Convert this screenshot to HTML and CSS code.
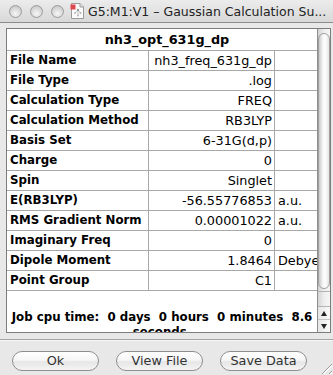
FILE: index.html
```html
<!DOCTYPE html>
<html>
<head>
<meta charset="utf-8">
<title>G5:M1:V1 – Gaussian Calculation Summary</title>
<link rel="stylesheet" href="styles.css">
</head>
<body>
<div class="window">
  <div class="titlebar">
    <div class="lights"><span class="light"></span><span class="light"></span><span class="light"></span></div>
    <svg class="docicon" width="15" height="16" viewBox="0 0 15 16">
      <path d="M1.5 0.5 H10 L13.5 4 V15.5 H1.5 Z" fill="#fbfbfb" stroke="#9a9a9a"/>
      <path d="M10 0.5 V4 H13.5" fill="#e4e4e4" stroke="#9a9a9a"/>
      <rect x="0.5" y="1.5" width="5" height="5" fill="#e0474c"/>
      <path d="M8 7 L5 10 M8 7 L10.5 10 M8 7 L8 12.5" stroke="#b8b8b8" stroke-width="0.8"/>
      <circle cx="8" cy="7" r="1.2" fill="#9a9a9a"/>
      <circle cx="5" cy="10" r="0.9" fill="#b0b0b0"/>
      <circle cx="10.5" cy="10" r="0.9" fill="#b0b0b0"/>
      <circle cx="8" cy="12.5" r="0.9" fill="#b0b0b0"/>
    </svg>
    <div class="title">G5:M1:V1 – Gaussian Calculation Su...</div>
  </div>
  <div class="content">
    <div class="box">
      <div class="upper">
        <div class="grid">
          <div class="head">nh3_opt_631g_dp</div>
          <div class="lab">File Name</div><div class="val">nh3_freq_631g_dp</div><div class="unit"></div>
          <div class="lab">File Type</div><div class="val">.log</div><div class="unit"></div>
          <div class="lab">Calculation Type</div><div class="val">FREQ</div><div class="unit"></div>
          <div class="lab">Calculation Method</div><div class="val">RB3LYP</div><div class="unit"></div>
          <div class="lab">Basis Set</div><div class="val">6-31G(d,p)</div><div class="unit"></div>
          <div class="lab">Charge</div><div class="val">0</div><div class="unit"></div>
          <div class="lab">Spin</div><div class="val">Singlet</div><div class="unit"></div>
          <div class="lab">E(RB3LYP)</div><div class="val">-56.55776853</div><div class="unit">a.u.</div>
          <div class="lab">RMS Gradient Norm</div><div class="val">0.00001022</div><div class="unit">a.u.</div>
          <div class="lab">Imaginary Freq</div><div class="val">0</div><div class="unit"></div>
          <div class="lab">Dipole Moment</div><div class="val">1.8464</div><div class="unit">Debye</div>
          <div class="lab">Point Group</div><div class="val">C1</div><div class="unit"></div>
        </div>
        <div class="vscroll"><div class="thumb"></div></div>
      </div>
      <div class="lower">
        <div class="job">Job cpu time:  0 days  0 hours  0 minutes  8.6<br>seconds.</div>
        <div class="vscroll small">
          <div class="arrow up"></div>
          <div class="arrow down"></div>
        </div>
      </div>
    </div>
    <div class="sep"></div>
    <div class="buttons">
      <button class="btn">Ok</button>
      <button class="btn">View File</button>
      <button class="btn">Save Data</button>
    </div>
  </div>
  <div class="grip"></div>
</div>
</body>
</html>
```

FILE: styles.css
```css
html, body {
  margin: 0;
  padding: 0;
}
body {
  width: 333px;
  height: 375px;
  overflow: hidden;
  background: #e8e8e8;
  font-family: "DejaVu Sans", "Liberation Sans", sans-serif;
  color: #000;
}
.window {
  position: relative;
  width: 333px;
  height: 375px;
  background: #e8e8e8;
}
.titlebar {
  height: 22px;
  border-bottom: 1px solid #8c8c8c;
  background: linear-gradient(#ececec, #d8d8d8);
  display: flex;
  align-items: center;
}
.lights {
  display: flex;
  gap: 8px;
  margin-left: 9px;
}
.light {
  width: 11px;
  height: 11px;
  border-radius: 50%;
  border: 1px solid #9c9c9c;
  background: radial-gradient(circle at 50% 70%, #f6f6f6 0%, #dedede 45%, #bdbdbd 100%);
}
.docicon {
  margin-left: 6px;
  margin-top: -1px;
}
.title {
  margin-left: 3px;
  font-size: 12.5px;
  color: #222;
  white-space: nowrap;
}
.content {
  padding-top: 5px;
}
.box {
  margin-left: 6px;
  width: 323px;
  border: 1px solid #7c7c7c;
  background: #fff;
}
.upper {
  display: flex;
  height: 262px;
}
.grid {
  width: 310px;
  display: grid;
  grid-template-columns: 142px 126px 42px;
  grid-template-rows: 22px;
  grid-auto-rows: 20px;
}
.grid > div {
  box-sizing: border-box;
  border-bottom: 1px solid #a8a8a8;
  white-space: nowrap;
  overflow: hidden;
}
.head {
  grid-column: 1 / -1;
  font-weight: bold;
  font-size: 12.8px;
  line-height: 21px;
  text-align: center;
  padding-left: 10px;
}
.lab {
  border-right: 1px solid #a8a8a8;
  font-weight: bold;
  font-size: 11.8px;
  line-height: 19px;
  padding-left: 3px;
}
.val {
  border-right: 1px solid #a8a8a8;
  font-size: 12.8px;
  line-height: 19px;
  text-align: right;
  padding-right: 2px;
}
.unit {
  font-size: 12.8px;
  line-height: 19px;
  padding-left: 3px;
}
.vscroll {
  width: 12px;
  border-left: 1px solid #8e8e8e;
  background: linear-gradient(to right, #d4d4d4, #eeeeee 50%, #f6f6f6);
  display: flex;
  flex-direction: column;
}
.thumb {
  margin: 4px 0 0 0;
  height: 256px;
  box-sizing: border-box;
  border: 1px solid #a0a0a0;
  border-radius: 6px;
  background: linear-gradient(to right, #c6c6c6, #f2f2f2 35%, #ffffff 60%, #e4e4e4);
}
.lower {
  display: flex;
  height: 41px;
}
.job {
  width: 310px;
  box-sizing: border-box;
  padding-top: 19px;
  font-weight: bold;
  font-size: 11.8px;
  line-height: 15px;
  text-align: center;
  white-space: pre-wrap;
  overflow: hidden;
}
.vscroll.small {
  border-top: 1px solid #b4b4b4;
  justify-content: flex-end;
}
.arrow {
  height: 12px;
  position: relative;
  background: linear-gradient(to right, #e6e6e6, #fafafa);
}
.arrow.up {
  border-top: 1px solid #b4b4b4;
  border-bottom: 1px solid #c4c4c4;
}
.arrow::after {
  content: "";
  position: absolute;
  left: 3px;
  top: 4px;
  border-left: 3.5px solid transparent;
  border-right: 3.5px solid transparent;
}
.arrow.up::after {
  border-bottom: 5px solid #222;
}
.arrow.down::after {
  border-top: 5px solid #222;
}
.sep {
  margin-top: 6px;
  border-top: 1px solid #a4a4a4;
  border-bottom: 1px solid #f6f6f6;
}
.buttons {
  display: flex;
  gap: 17px;
  padding-left: 12px;
  margin-top: 10px;
}
.btn {
  width: 87px;
  height: 20px;
  box-sizing: border-box;
  border: 1px solid #8e8e8e;
  border-radius: 10px;
  background: linear-gradient(#ffffff, #f6f6f6 45%, #e6e6e6 55%, #f4f4f4);
  font-family: "DejaVu Sans", "Liberation Sans", sans-serif;
  font-size: 12.8px;
  color: #333;
  padding: 0;
  line-height: 18px;
}
.grip {
  position: absolute;
  right: 1px;
  bottom: 1px;
  width: 11px;
  height: 11px;
  background: repeating-linear-gradient(135deg, transparent 0 3px, #9a9a9a 3px 4px, #fafafa 4px 5px);
  clip-path: polygon(100% 0, 100% 100%, 0 100%);
}
```
